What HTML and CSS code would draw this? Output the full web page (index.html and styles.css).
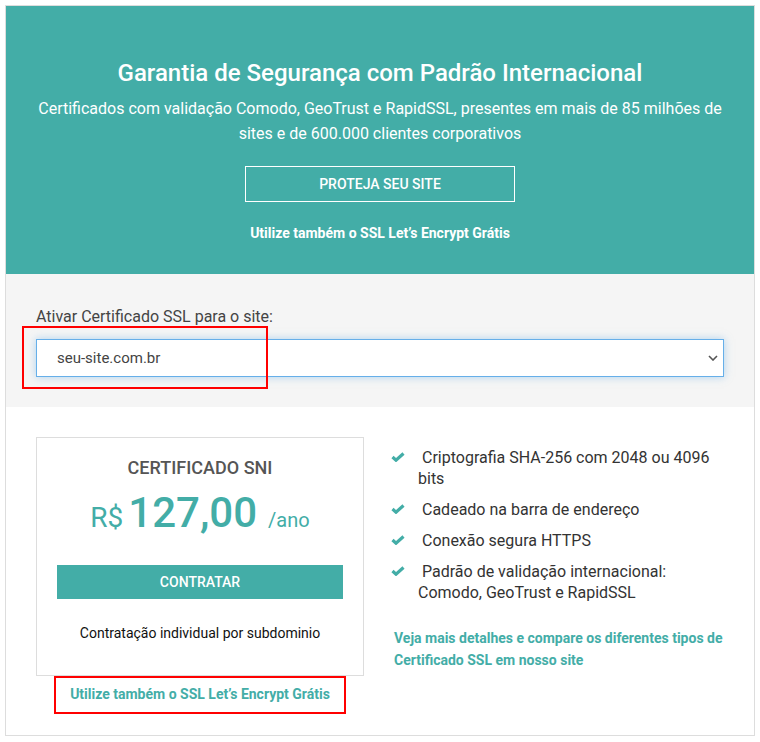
FILE: index.html
```
<!DOCTYPE html>
<html>
<head>
  <title>Certificado SSL</title>
  <link rel="stylesheet" href="styles.css">
</head>
<body>
  <div class="box">
    <div class="hero">
      <h1>Garantia de Segurança com Padrão Internacional</h1>
      <p class="lead">Certificados com validação Comodo, GeoTrust e RapidSSL, presentes em mais de 85 milhões de sites e de 600.000 clientes corporativos</p>
      <a class="btn-outline" href="#">PROTEJA SEU SITE</a>
      <a class="free-link" href="#">Utilize também o SSL Let’s Encrypt Grátis</a>
    </div>

    <div class="picker">
      <label for="site">Ativar Certificado SSL para o site:</label>
      <div class="select-wrap">
        <select id="site">
          <option>seu-site.com.br</option>
        </select>
        <svg class="chevron" viewBox="0 0 10 6"><path d="M1 1 L5 5 L9 1"/></svg>
      </div>
      <span class="mark mark-select"></span>
    </div>

    <div class="offer">
      <div class="plan-col">
        <div class="plan">
          <h3>CERTIFICADO SNI</h3>
          <div class="price"><span class="cur">R$</span><span class="val">127,00</span><span class="per">/ano</span></div>
          <a class="btn-buy" href="#">CONTRATAR</a>
          <p class="note">Contratação individual por subdominio</p>
        </div>
        <a class="free-alt" href="#">Utilize também o SSL Let’s Encrypt Grátis</a>
      </div>

      <div class="info-col">
        <ul class="features">
          <li><svg viewBox="0 0 14 10"><path d="M1.5 5 L5 8.2 L12.5 1.5"/></svg><span>Criptografia SHA-256 com 2048 ou 4096 bits</span></li>
          <li><svg viewBox="0 0 14 10"><path d="M1.5 5 L5 8.2 L12.5 1.5"/></svg><span>Cadeado na barra de endereço</span></li>
          <li><svg viewBox="0 0 14 10"><path d="M1.5 5 L5 8.2 L12.5 1.5"/></svg><span>Conexão segura HTTPS</span></li>
          <li><svg viewBox="0 0 14 10"><path d="M1.5 5 L5 8.2 L12.5 1.5"/></svg><span>Padrão de validação internacional: Comodo, GeoTrust e RapidSSL</span></li>
        </ul>
        <a class="details" href="#">Veja mais detalhes e compare os diferentes tipos de Certificado SSL em nosso site</a>
      </div>
    </div>
  </div>
</body>
</html>
```

FILE: styles.css
```
body {
  margin: 0;
  padding: 5px;
  font-family: Roboto, "Liberation Sans", sans-serif;
  color: #333;
  background: #fff;
}

a {
  text-decoration: none;
}

.box {
  width: 748px;
  border: 1px solid #ddd;
}

.hero {
  background-color: #43ada7;
  color: #fff;
  text-align: center;
  padding: 54px 30px 31px;
}

.hero h1 {
  margin: 0;
  font-size: 24px;
  font-weight: 500;
  line-height: 26px;
}

.lead {
  margin: 10px 0 20px;
  font-size: 16px;
  line-height: 25px;
}

.btn-outline {
  display: block;
  width: 268px;
  margin: 0 auto;
  border: 1px solid #fff;
  color: #fff;
  font-size: 14px;
  font-weight: 500;
  line-height: 34px;
}

.free-link {
  display: block;
  margin-top: 21px;
  color: #fff;
  font-size: 14px;
  font-weight: 700;
  line-height: 20px;
}

.picker {
  position: relative;
  background: #f5f5f5;
  padding: 32px 30px 30px;
}

.picker label {
  display: block;
  font-size: 16px;
  line-height: 22px;
  color: #444;
  margin-bottom: 11px;
}

.select-wrap {
  position: relative;
}

.picker select {
  display: block;
  width: 100%;
  height: 38px;
  padding: 0 20px;
  font-family: Roboto, "Liberation Sans", sans-serif;
  font-size: 15px;
  color: #444;
  background: #fff;
  border: 1px solid #66afe9;
  border-radius: 0;
  box-shadow: 0 0 8px rgba(102, 175, 233, 0.5);
  outline: none;
  appearance: none;
  -webkit-appearance: none;
}

.chevron {
  position: absolute;
  right: 6px;
  top: 16px;
  width: 10px;
  height: 6px;
  fill: none;
  stroke: #555;
  stroke-width: 1.6;
}

.mark {
  border: 2px solid #f00;
}

.mark-select {
  position: absolute;
  left: 16px;
  top: 52px;
  width: 242px;
  height: 59px;
}

.offer {
  display: grid;
  grid-template-columns: 328px 1fr;
  column-gap: 27px;
  padding: 30px 30px 21px;
}

.plan-col {
  text-align: center;
}

.plan {
  border: 1px solid #ddd;
  padding: 18px 20px 32px;
}

.plan h3 {
  margin: 0;
  font-size: 18px;
  font-weight: 500;
  line-height: 24px;
  color: #555;
}

.price {
  color: #43ada7;
  margin-top: 8px;
  line-height: 50px;
}

.cur {
  font-size: 28px;
}

.val {
  font-size: 42px;
  font-weight: 500;
  margin-left: 5px;
}

.per {
  font-size: 20px;
  margin-left: 11px;
}

.btn-buy {
  display: block;
  margin-top: 18px;
  background: #43ada7;
  color: #fff;
  font-size: 14px;
  font-weight: 500;
  line-height: 34px;
}

.note {
  margin: 24px 0 0;
  font-size: 14px;
  line-height: 20px;
  color: #111;
}

.free-alt {
  display: block;
  width: 288px;
  margin: 0 auto;
  padding: 7px 0 9px;
  border: 2px solid #f00;
  color: #43ada7;
  font-size: 14px;
  font-weight: 700;
  line-height: 18px;
}

.features {
  list-style: none;
  margin: 10px 0 0;
  padding: 0;
}

.features li {
  display: flex;
  font-size: 16px;
  line-height: 21px;
  color: #333;
  margin-bottom: 10px;
}

.features svg {
  width: 14px;
  height: 10px;
  flex: none;
  margin: 5px 13px 0 0;
  fill: none;
  stroke: #43ada7;
  stroke-width: 3.2;
}

.features span {
  text-indent: 4px;
}

.details {
  display: block;
  margin-top: 24px;
  padding-left: 3px;
  color: #43ada7;
  font-size: 14px;
  font-weight: 700;
  line-height: 22px;
}
```
